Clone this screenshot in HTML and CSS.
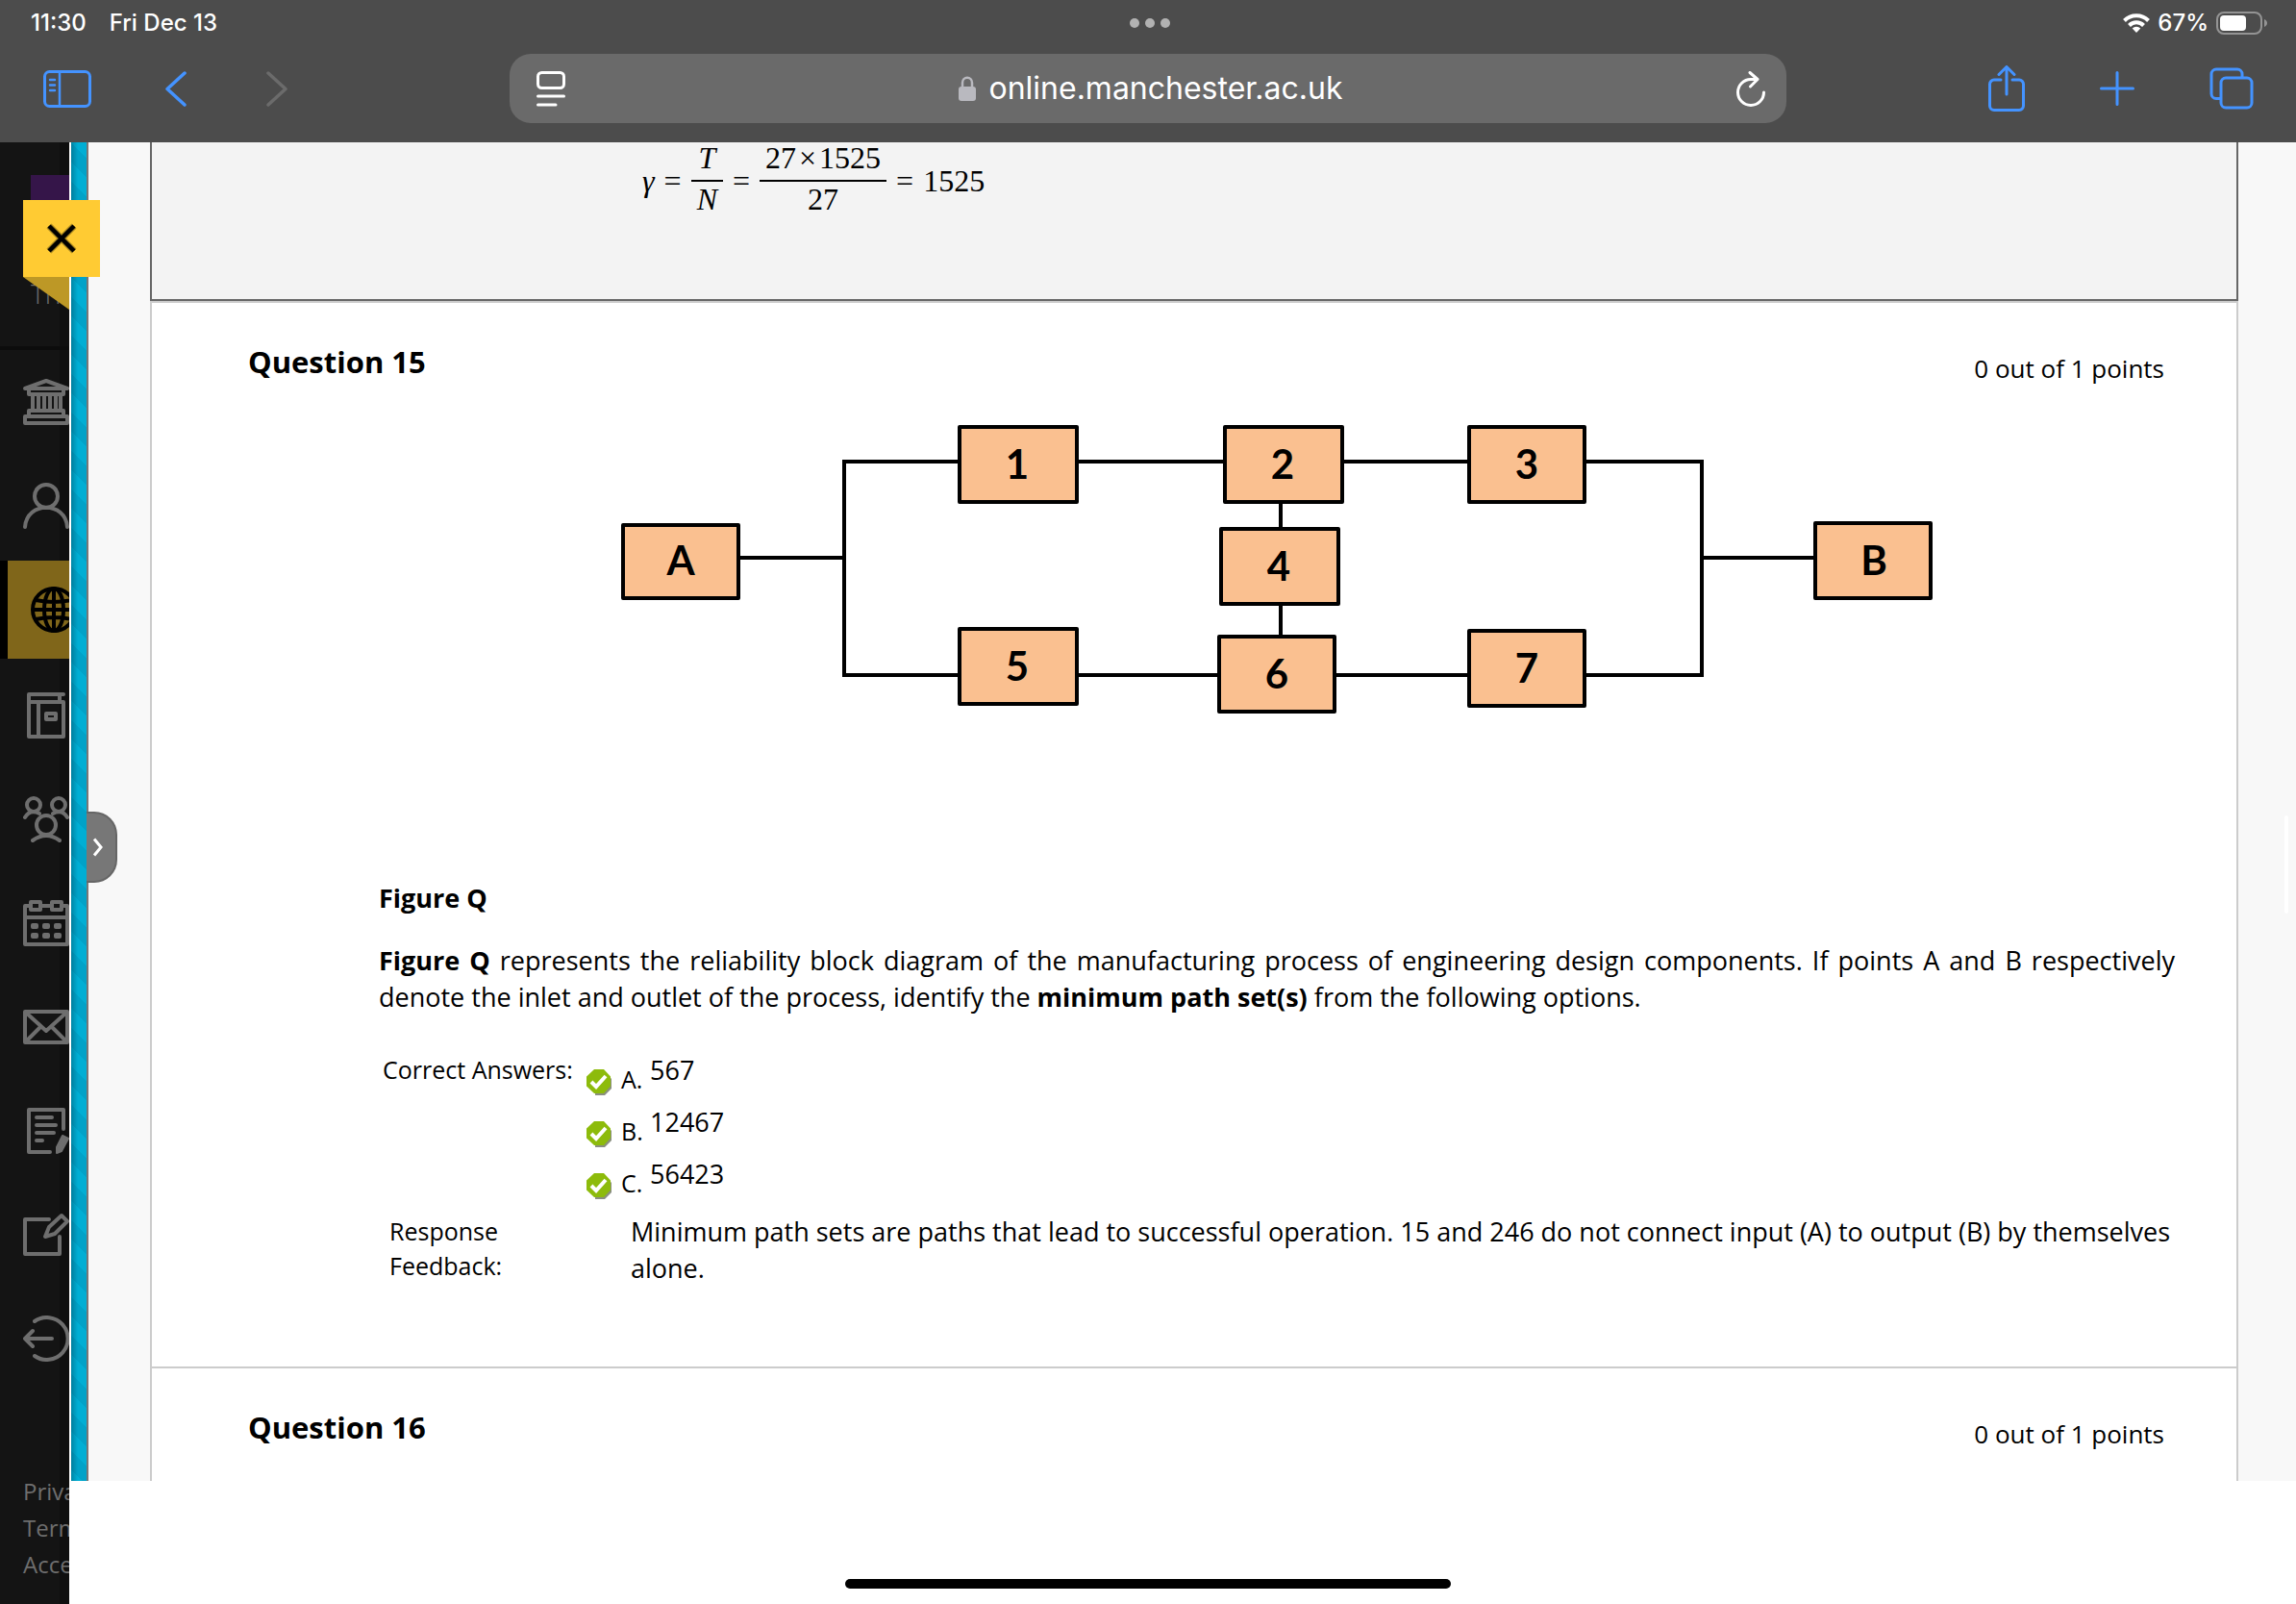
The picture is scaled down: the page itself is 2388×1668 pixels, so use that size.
FILE: index.html
```html
<!DOCTYPE html>
<html lang="en">
<head>
<meta charset="utf-8">
<title>Review Test Submission</title>
<link rel="stylesheet" href="styles.css">
</head>
<body>
<header class="chrome">
  <div class="status">
    <div class="status-left"><span>11:30</span><span>Fri Dec 13</span></div>
    <div class="dots"><i></i><i></i><i></i></div>
    <div class="status-right">
      <svg width="28" height="20" viewBox="0 0 28 20" fill="none" stroke="#fff" stroke-width="4"><path d="M1.500 7.500a17.500 17.500 0 0 1 25 0"/><path d="M6.500 12.500a10.500 10.500 0 0 1 15 0"/><path d="M14 20l-4.300-4.500a6 6 0 0 1 8.600 0z" fill="#fff" stroke="none"/></svg>
      <span>67%</span>
      <svg width="54" height="24" viewBox="0 0 54 24"><rect x="1" y="1" width="46" height="22" rx="7" fill="none" stroke="#949494" stroke-width="2"/><rect x="4" y="4" width="27" height="16" rx="4" fill="#fff"/><path d="M50 8c4 1.500 4 6.500 0 8z" fill="#949494"/></svg>
    </div>
  </div>
  <div class="toolbar">
    <div class="tools tools-left">
      <button class="tool" aria-label="Sidebar"><svg width="50" height="39" viewBox="0 0 50 39" fill="none" stroke="currentColor" stroke-width="3" stroke-linecap="round"><rect x="1.500" y="1.500" width="47" height="36" rx="5"/><path d="M17 2v35M7 10h5M7 15.500h5M7 21h5" stroke-width="2.500"/></svg></button>
      <button class="tool" aria-label="Back"><svg width="22" height="37" viewBox="0 0 22 37" fill="none" stroke="currentColor" stroke-width="3.500" stroke-linecap="round" stroke-linejoin="round"><path d="M20 2L2 18.500 20 35"/></svg></button>
      <button class="tool" aria-label="Forward" disabled><svg width="22" height="37" viewBox="0 0 22 37" fill="none" stroke="currentColor" stroke-width="3.500" stroke-linecap="round" stroke-linejoin="round"><path d="M2 2l18 16.500L2 35"/></svg></button>
    </div>
    <div class="address">
      <button class="tool light" aria-label="Page menu"><svg width="30" height="37" viewBox="0 0 30 37" fill="none" stroke="currentColor" stroke-width="3" stroke-linecap="round"><rect x="1.500" y="1.500" width="27" height="16" rx="4"/><path d="M1.500 26h27M1.500 35h18.500"/></svg></button>
      <div class="site">
        <svg width="18" height="26" viewBox="0 0 18 26"><path d="M4 12V7c0-7 10-7 10 0v5" fill="none" stroke="#b9b9bf" stroke-width="2.500"/><rect y="11" width="18" height="15" rx="3" fill="#b9b9bf"/></svg>
        <span>online.manchester.ac.uk</span>
      </div>
      <button class="tool light" aria-label="Reload"><svg width="30" height="37" viewBox="0 0 30 37" fill="none" stroke="currentColor" stroke-width="3" stroke-linecap="round" stroke-linejoin="round"><path d="M28.500 22A13.500 13.500 0 1 1 15 8.500h6.500M14 1.500l8 7-7.500 7.500"/></svg></button>
    </div>
    <div class="tools tools-right">
      <button class="tool" aria-label="Share"><svg width="38" height="48" viewBox="0 0 38 48" fill="none" stroke="currentColor" stroke-width="3" stroke-linecap="round" stroke-linejoin="round"><path d="M13 15H6a4.500 4.500 0 0 0-4.500 4.500V42A4.500 4.500 0 0 0 6 46.500h26a4.500 4.500 0 0 0 4.500-4.500V19.500A4.500 4.500 0 0 0 32 15h-7M19 30V2M11 9.500L19 1.500l8 8"/></svg></button>
      <button class="tool" aria-label="New tab"><svg width="36" height="36" viewBox="0 0 36 36" fill="none" stroke="currentColor" stroke-width="3" stroke-linecap="round"><path d="M18 1.500v33M1.500 18h33"/></svg></button>
      <button class="tool" aria-label="Tabs"><svg width="46" height="44" viewBox="0 0 46 44" fill="none" stroke="currentColor" stroke-width="3"><rect x="12" y="11" width="32" height="31" rx="5"/><path d="M12 32.500H7A5 5 0 0 1 2 27.500V7a5 5 0 0 1 5-5h22a5 5 0 0 1 5 5v4"/></svg></button>
    </div>
  </div>
</header>

<div class="app">
  <nav class="rail" aria-label="Main">
    <div class="brand"><div class="logo"></div><div class="brand-text">The</div></div>
    <a class="rail-item" href="#" aria-label="Institution"><svg width="48" height="48" viewBox="0 0 48 48" fill="none" stroke="currentColor" stroke-width="4" stroke-linejoin="round"><path d="M2 10L24 2l22 8zM6 11v5h36v-5M10 17v15M16 17v15M22 17v15M28 17v15M34 17v15M39 17v15M6 38v-5h36v5M2 46v-7h44v7z"/></svg></a>
    <a class="rail-item" href="#" aria-label="Profile"><svg width="48" height="48" viewBox="0 0 48 48" fill="none" stroke="currentColor" stroke-width="4" stroke-linecap="round"><ellipse cx="24" cy="14" rx="12" ry="12"/><path d="M2 46c2-27 42-27 44 0"/></svg></a>
    <a class="rail-item active" href="#" aria-label="Courses"><svg width="48" height="48" viewBox="0 0 48 48" fill="none" stroke="currentColor" stroke-width="4"><circle cx="24" cy="24" r="22"/><ellipse cx="24" cy="24" rx="10" ry="22"/><path d="M24 2v44M2 24h44M5 14q19 4 38 0M5 34q19-4 38 0"/></svg></a>
    <a class="rail-item" href="#" aria-label="Organisations"><svg width="48" height="48" viewBox="0 0 48 48" fill="none" stroke="currentColor" stroke-width="4" stroke-linecap="round" stroke-linejoin="round"><path d="M42 2H6v44h36V10H6M38 2v8M16 10v36"/><rect x="24" y="22" width="10" height="6"/></svg></a>
    <a class="rail-item" href="#" aria-label="Groups"><svg width="48" height="48" viewBox="0 0 48 48" fill="none" stroke="currentColor" stroke-width="4" stroke-linecap="round"><circle cx="11" cy="9" r="7"/><circle cx="37" cy="9" r="7"/><circle cx="24" cy="30" r="10"/><path d="M2 22q5-9 15-4M46 22q-5-9-15-4M10 46q14-10 28 0"/></svg></a>
    <a class="rail-item" href="#" aria-label="Calendar"><svg width="48" height="48" viewBox="0 0 48 48" fill="none" stroke="currentColor" stroke-width="4" stroke-linejoin="round"><path d="M7 6H2v40h44V6h-5M20 6h8M2 18h44"/><rect x="8" y="2" width="10" height="8"/><rect x="30" y="2" width="10" height="8"/><g fill="currentColor" stroke="none"><rect x="8" y="24" width="8" height="6" rx="2"/><rect x="20" y="24" width="8" height="6" rx="2"/><rect x="32" y="24" width="8" height="6" rx="2"/><rect x="8" y="34" width="8" height="6" rx="2"/><rect x="20" y="34" width="8" height="6" rx="2"/><rect x="32" y="34" width="8" height="6" rx="2"/></g></svg></a>
    <a class="rail-item" href="#" aria-label="Messages"><svg width="48" height="48" viewBox="0 0 48 48" fill="none" stroke="currentColor" stroke-width="4" stroke-linejoin="round"><path d="M2 8h44v32H2zM3 9l21 19L45 9M3 39l15-15M45 39L30 24"/></svg></a>
    <a class="rail-item" href="#" aria-label="Grades"><svg width="48" height="48" viewBox="0 0 48 48" fill="none" stroke="currentColor" stroke-width="4" stroke-linecap="round" stroke-linejoin="round"><path d="M28 46H6V2h36v20M14 10h16M14 18h20M14 26h18M14 34h6"/><path d="M41 29l6 3-7 13-5 2 0-6z" fill="currentColor" stroke-width="2"/></svg></a>
    <a class="rail-item" href="#" aria-label="Tools"><svg width="48" height="48" viewBox="0 0 48 48" fill="none" stroke="currentColor" stroke-width="4" stroke-linecap="round" stroke-linejoin="round"><path d="M27 8H2v36h36V26M23 26l4-10L40 4l6 6-13 13z"/></svg></a>
    <a class="rail-item" href="#" aria-label="Sign out"><svg width="48" height="48" viewBox="0 0 48 48" fill="none" stroke="currentColor" stroke-width="4" stroke-linecap="round" stroke-linejoin="round"><path d="M12 6a22 22 0 1 1 0 36M30 24H2M10 16l-8 8 8 8"/></svg></a>
    <div class="rail-links"><a href="#">Privacy</a><a href="#">Terms</a><a href="#">Accessibility</a></div>
  </nav>

  <div class="stage">
    <div class="panel">
      <div class="stripe"></div>
      <main class="page">
        <section class="previous">
          <div class="formula">
            <i>γ</i><span>=</span>
            <span class="frac"><i>T</i><i>N</i></span><span>=</span>
            <span class="frac"><span>27<span class="times">×</span>1525</span><span>27</span></span><span>=</span><span>1525</span>
          </div>
        </section>

        <article class="question">
          <header class="q-head"><h3>Question 15</h3><p class="points">0 out of 1 points</p></header>
          <div class="q-body">
            <svg class="diagram" width="1376" height="320" viewBox="640 430 1376 320" role="img" aria-label="Reliability block diagram">
              <g class="wire"><path d="M768 581H878M998 481H878V703H998M1120 481H1274M1120 703H1268M1396 481H1528M1388 703H1528M1648 481H1770V703H1648M1770 581H1888M1332 523V551M1332 629V663"/></g>
              <g class="block">
                <rect x="648" y="547" width="120" height="76"/><rect x="998" y="445" width="122" height="78"/><rect x="1274" y="445" width="122" height="78"/><rect x="1528" y="445" width="120" height="78"/><rect x="1270" y="551" width="122" height="78"/><rect x="998" y="655" width="122" height="78"/><rect x="1268" y="663" width="120" height="78"/><rect x="1528" y="657" width="120" height="78"/><rect x="1888" y="545" width="120" height="78"/>
              </g>
              <g class="label">
                <text x="708" y="599">A</text><text x="1058" y="499">1</text><text x="1334" y="499">2</text><text x="1588" y="499">3</text><text x="1330" y="605">4</text><text x="1058" y="709">5</text><text x="1328" y="717">6</text><text x="1588" y="711">7</text><text x="1949" y="599">B</text>
              </g>
            </svg>
            <p class="caption"><b>Figure Q</b></p>
            <p class="prompt"><b>Figure Q</b> represents the reliability block diagram of the manufacturing process of engineering design components. If points A and B respectively denote the inlet and outlet of the process, identify the <b>minimum path set(s)</b> from the following options.</p>
            <dl class="row answers">
              <dt>Correct Answers:</dt>
              <dd>
                <ul>
                  <li><svg class="tick" width="26" height="27" viewBox="0 0 26 27"><path d="M9 2h10l7 8v10l-7 7H9z" fill="#8a8f80"/><path d="M8 0h10l7 7.500v10L18 25H8L0 17.500v-10z" fill="#8dbb0b"/><path d="M5 13l5 5L20 7" fill="none" stroke="#fff" stroke-width="4"/></svg><span class="letter">A.</span><span>567</span></li>
                  <li><svg class="tick" width="26" height="27" viewBox="0 0 26 27"><path d="M9 2h10l7 8v10l-7 7H9z" fill="#8a8f80"/><path d="M8 0h10l7 7.500v10L18 25H8L0 17.500v-10z" fill="#8dbb0b"/><path d="M5 13l5 5L20 7" fill="none" stroke="#fff" stroke-width="4"/></svg><span class="letter">B.</span><span>12467</span></li>
                  <li><svg class="tick" width="26" height="27" viewBox="0 0 26 27"><path d="M9 2h10l7 8v10l-7 7H9z" fill="#8a8f80"/><path d="M8 0h10l7 7.500v10L18 25H8L0 17.500v-10z" fill="#8dbb0b"/><path d="M5 13l5 5L20 7" fill="none" stroke="#fff" stroke-width="4"/></svg><span class="letter">C.</span><span>56423</span></li>
                </ul>
              </dd>
            </dl>
            <dl class="row feedback">
              <dt>Response<br>Feedback:</dt>
              <dd>Minimum path sets are paths that lead to successful operation. 15 and 246 do not connect input (A) to output (B) by themselves alone.</dd>
            </dl>
          </div>
        </article>

        <article class="question">
          <header class="q-head"><h3>Question 16</h3><p class="points">0 out of 1 points</p></header>
        </article>
      </main>
      <div class="scroll-thumb"></div>
      <button class="handle" aria-label="Show course menu"><svg width="12" height="20" viewBox="0 0 12 20" fill="none" stroke="#fff" stroke-width="3"><path d="M2 1.500l7 8.500-7 8.500"/></svg></button>
    </div>
    <footer class="home"><div class="home-bar"></div></footer>
  </div>

  <div class="close-tab">
    <button class="close" aria-label="Close"><svg width="32" height="32" viewBox="0 0 32 32" fill="none"><path d="M3 3l26 26M29 3L3 29" stroke="#a8861f" stroke-width="7"/><path d="M3 3l26 26M29 3L3 29" stroke="#000" stroke-width="4.500"/></svg></button>
    <div class="fold"></div>
  </div>
</div>
</body>
</html>
```
FILE: styles.css
```css
* { box-sizing: border-box; }
body {
  margin: 0;
  height: 100vh;
  display: flex;
  flex-direction: column;
  overflow: hidden;
  background: #fff;
  color: #000;
  font: 27px/38px "Open Sans", "Noto Sans", sans-serif;
}
h3, p, ul, dl, dd { margin: 0; padding: 0; }
ul { list-style: none; }
svg { display: block; flex: none; }
button { border: 0; padding: 0; background: none; }

/* Browser chrome */
.chrome {
  flex: none;
  height: 148px;
  background: #4c4c4c;
  color: #fff;
  font-family: Inter, "Liberation Sans", sans-serif;
}
.status {
  display: grid;
  grid-template-columns: 1fr auto 1fr;
  align-items: center;
  height: 48px;
  padding: 0 29px 0 32px;
  font-size: 24px;
  font-weight: 500;
}
.status-left { display: flex; gap: 24px; }
.status-right { display: flex; gap: 8px; align-items: center; justify-content: flex-end; }
.dots { display: flex; gap: 6px; }
.dots i { width: 10px; height: 10px; border-radius: 50%; background: #b2b2b2; }
.toolbar {
  display: grid;
  grid-template-columns: 1fr 1328px 1fr;
  align-items: center;
  height: 88px;
}
.tools { display: flex; align-items: center; }
.tools-left { padding-left: 45px; gap: 77px; }
.tools-left .tool:last-child { margin-left: 6px; }
.tools-right { justify-content: flex-end; padding-right: 44px; gap: 78px; }
.tool { color: #4493ff; }
.tool:disabled { color: #6b6b6b; }
.tool.light { color: #fff; }
.address {
  display: flex;
  align-items: center;
  justify-content: space-between;
  height: 72px;
  padding: 0 22px 0 28px;
  border-radius: 22px;
  background: #6a6a6a;
}
.site { display: flex; align-items: center; gap: 13px; font-size: 32px; }

/* App shell */
.app { position: relative; flex: 1; display: flex; min-height: 0; }
.rail {
  flex: none;
  width: 72px;
  overflow: hidden;
  white-space: nowrap;
  background: linear-gradient(90deg, #141414 62px, #0f0f0f 62px);
  color: #6e6e6e;
}
.brand { height: 216px; padding: 34px 0 0 32px; border-bottom: 4px solid #0c0c0c; }
.logo { height: 80px; background: #351549; }
.brand-text { margin-top: 24px; font-size: 28px; line-height: 38px; font-weight: 300; }
.rail-item { display: flex; align-items: center; height: 108px; padding-left: 24px; color: inherit; }
.rail-item.active { height: 102px; margin: 3px 0 5px; background: #80661a; border-left: 8px solid #000; color: #000; }
.rail-links { display: flex; flex-direction: column; padding: 86px 0 0 24px; font-size: 24px; }
.rail-links a { color: #6e6e6e; text-decoration: none; }
.stage { flex: 1; min-width: 0; display: flex; flex-direction: column; }
.panel { position: relative; flex: 1; min-height: 0; display: flex; overflow: hidden; background: #f8f8f8; }
.stripe {
  flex: none;
  width: 20px;
  border-left: 2px solid #fff;
  border-right: 2px solid #777;
  background:
    linear-gradient(90deg, rgba(0, 60, 80, .35), transparent 7px),
    linear-gradient(45deg, #00aed4 25%, #00a2c8 25%, #00a2c8 50%, #00aed4 50%, #00aed4 75%, #00a2c8 75%) 0 0 / 40px 40px;
}
.home { flex: none; height: 128px; padding-top: 102px; margin-left: -72px; display: flex; justify-content: center; }
.home-bar { width: 630px; height: 10px; border-radius: 5px; background: #000; }

/* Questions */
.page { flex: 1; min-width: 0; display: flex; flex-direction: column; margin: 0 60px 0 64px; }
.previous { flex: none; height: 165px; padding-left: 510px; border: solid #666; border-width: 0 2px 2px; background: #f3f3f3; }
.formula { display: flex; align-items: center; gap: 10px; height: 80px; font: 32px/46px "Liberation Serif", serif; }
.frac { display: flex; flex-direction: column; text-align: center; }
.frac > * { padding: 0 6px; }
.frac > :first-child { border-bottom: 2px solid #000; }
.frac > :last-child { margin-bottom: 10px; line-height: 36px; }
.times { padding: 0 3px; }
.question { flex: none; border: 2px solid #ccc; border-bottom: 0; background: #fff; }
.question:last-child { flex: 1 0 auto; }
.q-head { display: flex; justify-content: space-between; padding: 41px 75px 0 100px; }
.q-head h3 { font-size: 31px; line-height: 40px; }
.points { padding-top: 7px; font-size: 26px; line-height: 40px; }
.q-body { padding: 26px 64px 83px 236px; }
.diagram { margin: 0 auto 166px; }
.wire { fill: none; stroke: #000; stroke-width: 4; }
.block { fill: #fac090; stroke: #000; stroke-width: 4; stroke-linejoin: round; }
.label { font: bold 42px Lato, "Open Sans", sans-serif; text-anchor: middle; }
.prompt { margin: 27px 0 38px; text-align: justify; }
.row { display: flex; }
.row dt { flex: none; font-size: 25px; line-height: 36px; }
.answers { padding-left: 4px; }
.answers dt { width: 212px; }
.answers li { display: flex; height: 54px; }
.tick { margin-top: 18px; }
.letter { flex: none; width: 30px; margin: 9px 0 0 10px; font-size: 25px; }
.feedback { padding: 6px 0 0 11px; }
.feedback dt { width: 251px; }

/* Overlays */
.close-tab { position: absolute; left: 24px; top: 60px; }
.close { display: flex; align-items: center; justify-content: center; width: 80px; height: 80px; background: #ffcb33; }
.fold { width: 48px; height: 34px; background: #bd9826; clip-path: polygon(0 0, 100% 0, 100% 100%); }
.handle {
  position: absolute;
  left: 18px;
  top: 696px;
  width: 32px;
  height: 74px;
  padding-left: 6px;
  border: 2px solid #666;
  border-left: 0;
  border-radius: 0 24px 24px 0;
  background: #777;
}
.scroll-thumb { position: absolute; right: 8px; top: 700px; width: 4px; height: 102px; border-radius: 2px; background: #fff; }
```
